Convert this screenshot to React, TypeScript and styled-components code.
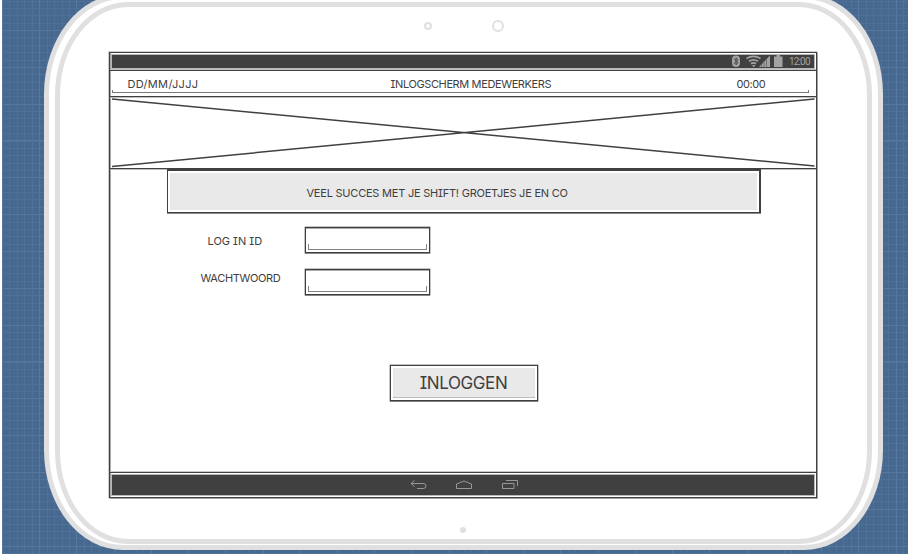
import React from "react";
import styled, { createGlobalStyle } from "styled-components";

const ink = "#404040";
const soft = "#e0e0e0";

const Global = createGlobalStyle`
  * { box-sizing: border-box; }
  body { margin: 0; overflow: hidden; background: #fff; }
`;

const Backdrop = styled.main`
  width: 908px;
  height: 554px;
  overflow: hidden;
  border-left: 2px solid #fff;
  padding-left: 42px;
  color: ${ink};
  font-family: Inter, "Noto Sans", sans-serif;
  font-feature-settings: "cv08";
  background:
    repeating-linear-gradient(90deg, #56789f 0 1px, transparent 1px 37.23px),
    repeating-linear-gradient(180deg, transparent 0 30px, #56789f 30px 31px, transparent 31px 36.83px),
    repeating-linear-gradient(90deg, #4f7199 0 1px, transparent 1px 7.446px),
    repeating-linear-gradient(180deg, transparent 0 0.6px, #4f7199 0.6px 1.6px, transparent 1.6px 7.366px),
    #47698f;
  background-origin: padding-box;
`;

const Tablet = styled.section`
  width: 839px;
  height: 556px;
  margin-top: -6px;
  border: 5px solid ${soft};
  border-radius: 79px / 100px;
  background: #fff;
  padding: 3px 6px 1px;
`;

const Face = styled.div`
  height: 100%;
  border: 5px solid ${soft};
  border-radius: 73px / 93px;
  display: flex;
  flex-direction: column;
  align-items: center;
`;

const Sensors = styled.div`
  height: 45px;
  width: 100%;
  padding: 13px 0 0 364px;
  display: flex;
  align-items: flex-start;
  gap: 60px;
`;

const Lens = styled.i<{ $size: number }>`
  width: ${p => p.$size}px;
  height: ${p => p.$size}px;
  margin-top: ${p => (12 - p.$size) / 2}px;
  border: 2px solid ${soft};
  border-radius: 50%;
`;

const Speaker = styled.i`
  width: 6px;
  height: 6px;
  margin: 29px 1px 0 0;
  border-radius: 50%;
  background: ${soft};
`;

const Screen = styled.div`
  width: 708px;
  height: 446px;
  margin-right: 2px;
  border: 1px solid ${ink};
  box-shadow: 0 0 0 0.5px #9a9a9a, 1px 1px #aaa, inset 1px 0 #aaa;
  display: flex;
  flex-direction: column;
  flex: none;
`;

const SystemBar = styled.div<{ $height: number }>`
  flex: none;
  height: ${p => p.$height}px;
  margin: 2px;
  background: ${ink};
  box-shadow: 0 0 0 1px #b8b8b8;
`;

const Svg = styled.svg`
  display: block;
  fill: none;
`;

const Header = styled.header`
  height: 27px;
  border-top: 1px solid ${ink};
  border-bottom: 1px solid ${ink};
  box-shadow: 0 -1px #c0c0c0, 0 1px #c0c0c0;
  padding: 0 7px 3px 2px;
  flex: none;
`;

const HeaderLine = styled.div`
  height: 22px;
  padding-top: 5px;
  border-bottom: 1px solid #777;
  background:
    linear-gradient(#777, #777) left bottom / 1px 2px no-repeat,
    linear-gradient(#777, #777) right bottom / 1px 2px no-repeat;
  display: grid;
  grid-template-columns: 279px 346px 1fr;
`;

const Label = styled.span<{ $indent?: number; $size?: number; $track?: number }>`
  display: block;
  padding-left: ${p => p.$indent ?? 0}px;
  font-size: ${p => p.$size ?? 11}px;
  line-height: 16px;
  letter-spacing: ${p => p.$track ?? 0}px;
  white-space: nowrap;
`;

const Banner = styled.div`
  height: 72px;
  flex: none;
  border-bottom: 1px solid ${ink};
  box-shadow: 0 1px #bbb;
`;

const Message = styled.div`
  width: 594px;
  height: 44px;
  flex: none;
  margin-left: 57px;
  border: solid ${ink};
  border-width: 2px 2px 1px 1px;
  box-shadow: 0 1px #888, inset 0 0 0 2px #fff;
  background: #e9e9e9;
  padding: 14px 0 0 139px;
`;

const Form = styled.form`
  flex: 1;
  padding-top: 14px;
  display: flex;
  flex-direction: column;
`;

const Field = styled.label`
  height: 42px;
  flex: none;
  display: grid;
  grid-template-columns: 194px 126px;
  align-items: start;
`;

const FieldName = styled.div<{ $top: number }>`
  padding-top: ${p => p.$top}px;
`;

const Entry = styled.div`
  width: 125px;
  height: 26px;
  margin-left: 1px;
  border: 1px solid ${ink};
  box-shadow: 0 0 0 0.5px #888, 0 1px #888, inset 0 1px #aaa;
  padding: 16px 2px 0;
`;

const Underline = styled.div`
  height: 6px;
  border: solid #858585;
  border-width: 0 1px 1px;
`;

const Submit = styled.button`
  width: 148px;
  height: 36px;
  flex: none;
  margin: 54px 0 0 280px;
  padding: 0;
  border: 1px solid ${ink};
  border-radius: 0;
  box-shadow: 0 0 0 0.5px #888, 0 1px #777, inset 0 0 0 2px #fff, inset 0 -3px #bbb;
  background: #e9e9e9;
  color: ${ink};
  font: inherit;
  font-feature-settings: inherit;
  display: grid;
  place-items: center;
`;

const Dock = styled.footer`
  flex: none;
  display: grid;
  border-top: 1px solid ${ink};
  box-shadow: 0 -1px #c8c8c8;
`;

export default function App() {
  return (
    <Backdrop>
      <Global />
      <Tablet>
        <Face>
          <Sensors><Lens $size={8} /><Lens $size={12} /></Sensors>
          <Screen>
            <SystemBar $height={13}>
              <Svg width="702" height="13" viewBox="0 0 702 13">
                <rect x="620" y="0.5" width="8" height="11.5" rx="4" fill="#a2a2a2" />
                <path d="M622 3.8l4 4-2 2V2.8l2 2-4 4" stroke={ink} strokeWidth="0.9" />
                <g stroke="#a2a2a2" strokeWidth="1.7">
                  <path d="M634.5 3.5q7-4.4 14 0M637 6.3q4.5-3 9 0M639 8.8q2.5-1.8 5 0" />
                </g>
                <path d="M640 10h3.4l-1.7 2.2z" fill="#a2a2a2" />
                <path d="M647 12h11V0.5z" fill="#a2a2a2" />
                <path d="M649.5 9v3M652 6v6M654.5 4v8" stroke="#666" strokeWidth="0.8" />
                <path d="M662 1.5h2.5V0h3.5v1.5h2.5V12H662z" fill="#a2a2a2" />
                <text x="677" y="9.8" fontFamily="Roboto, sans-serif" fontSize="10" textLength="21.5" fill="#a2a2a2">12:00</text>
              </Svg>
            </SystemBar>
            <Header>
              <HeaderLine>
                <Label $indent={16} $track={0.32}>DD/MM/JJJJ</Label>
                <Label $track={-0.38}>INLOGSCHERM MEDEWERKERS</Label>
                <Label $track={-0.45}>00:00</Label>
              </HeaderLine>
            </Header>
            <Banner>
              <Svg width="706" height="71" viewBox="0 0 706 71">
                <path d="M2 2L704.5 69M2 69.5L704.5 2" stroke={ink} strokeWidth="1.5" />
              </Svg>
            </Banner>
            <Message><Label $track={-0.22}>VEEL SUCCES MET JE SHIFT! GROETJES JE EN CO</Label></Message>
            <Form onSubmit={e => e.preventDefault()}>
              <Field>
                <FieldName $top={6}><Label $indent={98}>LOG IN ID</Label></FieldName>
                <Entry><Underline /></Entry>
              </Field>
              <Field>
                <FieldName $top={1}><Label $indent={91} $track={-0.35}>WACHTWOORD</Label></FieldName>
                <Entry><Underline /></Entry>
              </Field>
              <Submit><Label $size={17} $track={-0.4}>INLOGGEN</Label></Submit>
            </Form>
            <Dock>
              <SystemBar $height={20}>
                <Svg width="702" height="20" viewBox="0 0 702 20" stroke="#a0a0a0" strokeWidth="0.9">
                  <path d="M302.5 5.5l-3.5 3 3.5 3M299 8.500h12q3 0 3 2.500t-3 2.500h-6M344.500 13.500V9l7.500-3 7.500 3v4.500zM390.500 8.500h11.500v5h-11.500zM394 5.500h11.500v5.500" />
                </Svg>
              </SystemBar>
            </Dock>
          </Screen>
          <Speaker />
        </Face>
      </Tablet>
    </Backdrop>
  );
}
